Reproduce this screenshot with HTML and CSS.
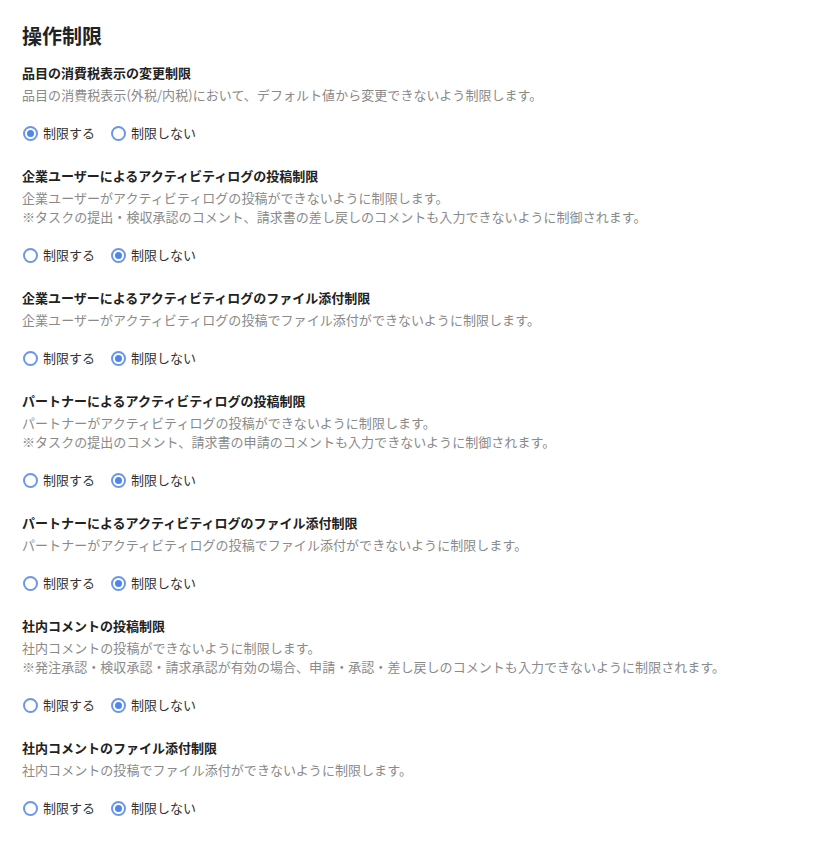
FILE: index.html
```html
<!DOCTYPE html>
<html lang="ja">
<head>
<meta charset="utf-8">
<link rel="stylesheet" href="styles.css">
</head>
<body>
<div class="page">
  <h1 class="page-title">操作制限</h1>

  <section class="setting">
    <div class="setting-title">品目の消費税表示の変更制限</div>
    <div class="setting-desc">品目の消費税表示(外税/内税)において、デフォルト値から変更できないよう制限します。</div>
    <div class="radios">
      <label class="radio"><span class="dot checked"></span>制限する</label>
      <label class="radio"><span class="dot"></span>制限しない</label>
    </div>
  </section>

  <section class="setting">
    <div class="setting-title">企業ユーザーによるアクティビティログの投稿制限</div>
    <div class="setting-desc">企業ユーザーがアクティビティログの投稿ができないように制限します。<br>※タスクの提出・検収承認のコメント、請求書の差し戻しのコメントも入力できないように制御されます。</div>
    <div class="radios">
      <label class="radio"><span class="dot"></span>制限する</label>
      <label class="radio"><span class="dot checked"></span>制限しない</label>
    </div>
  </section>

  <section class="setting">
    <div class="setting-title">企業ユーザーによるアクティビティログのファイル添付制限</div>
    <div class="setting-desc">企業ユーザーがアクティビティログの投稿でファイル添付ができないように制限します。</div>
    <div class="radios">
      <label class="radio"><span class="dot"></span>制限する</label>
      <label class="radio"><span class="dot checked"></span>制限しない</label>
    </div>
  </section>

  <section class="setting">
    <div class="setting-title">パートナーによるアクティビティログの投稿制限</div>
    <div class="setting-desc">パートナーがアクティビティログの投稿ができないように制限します。<br>※タスクの提出のコメント、請求書の申請のコメントも入力できないように制御されます。</div>
    <div class="radios">
      <label class="radio"><span class="dot"></span>制限する</label>
      <label class="radio"><span class="dot checked"></span>制限しない</label>
    </div>
  </section>

  <section class="setting">
    <div class="setting-title">パートナーによるアクティビティログのファイル添付制限</div>
    <div class="setting-desc">パートナーがアクティビティログの投稿でファイル添付ができないように制限します。</div>
    <div class="radios">
      <label class="radio"><span class="dot"></span>制限する</label>
      <label class="radio"><span class="dot checked"></span>制限しない</label>
    </div>
  </section>

  <section class="setting">
    <div class="setting-title">社内コメントの投稿制限</div>
    <div class="setting-desc">社内コメントの投稿ができないように制限します。<br>※発注承認・検収承認・請求承認が有効の場合、申請・承認・差し戻しのコメントも入力できないように制限されます。</div>
    <div class="radios">
      <label class="radio"><span class="dot"></span>制限する</label>
      <label class="radio"><span class="dot checked"></span>制限しない</label>
    </div>
  </section>

  <section class="setting">
    <div class="setting-title">社内コメントのファイル添付制限</div>
    <div class="setting-desc">社内コメントの投稿でファイル添付ができないように制限します。</div>
    <div class="radios">
      <label class="radio"><span class="dot"></span>制限する</label>
      <label class="radio"><span class="dot checked"></span>制限しない</label>
    </div>
  </section>
</div>
</body>
</html>
```
FILE: styles.css
```css
html, body {
  margin: 0;
  padding: 0;
  background: #ffffff;
}
body {
  font-family: "Noto Sans CJK JP", "Noto Sans", sans-serif;
  color: #222222;
}
.page {
  padding: 22px 22px 20px 22px;
}
.page-title {
  margin: 0 0 13px 0;
  font-size: 20px;
  line-height: 28px;
  font-weight: 700;
  color: #222222;
}
.setting {
  margin-bottom: 23px;
}
.setting-title {
  font-size: 13px;
  line-height: 20px;
  font-weight: 700;
  color: #222222;
  margin-bottom: 2px;
}
.setting-desc {
  font-size: 13px;
  line-height: 19px;
  letter-spacing: 0.05px;
  color: #8a8a8a;
}
.radios {
  display: flex;
  gap: 15px;
  margin-top: 19px;
  height: 20px;
  align-items: center;
}
.radio {
  display: flex;
  align-items: center;
  font-size: 13px;
  line-height: 20px;
  color: #333333;
}
.dot {
  box-sizing: border-box;
  width: 15px;
  height: 15px;
  border: 2px solid #6b96ea;
  border-radius: 50%;
  margin: 0 5px 0 1px;
  position: relative;
  background: #ffffff;
}
.dot.checked::after {
  content: "";
  position: absolute;
  left: 2px;
  top: 2px;
  width: 7px;
  height: 7px;
  border-radius: 50%;
  background: #4f86ec;
}
```
